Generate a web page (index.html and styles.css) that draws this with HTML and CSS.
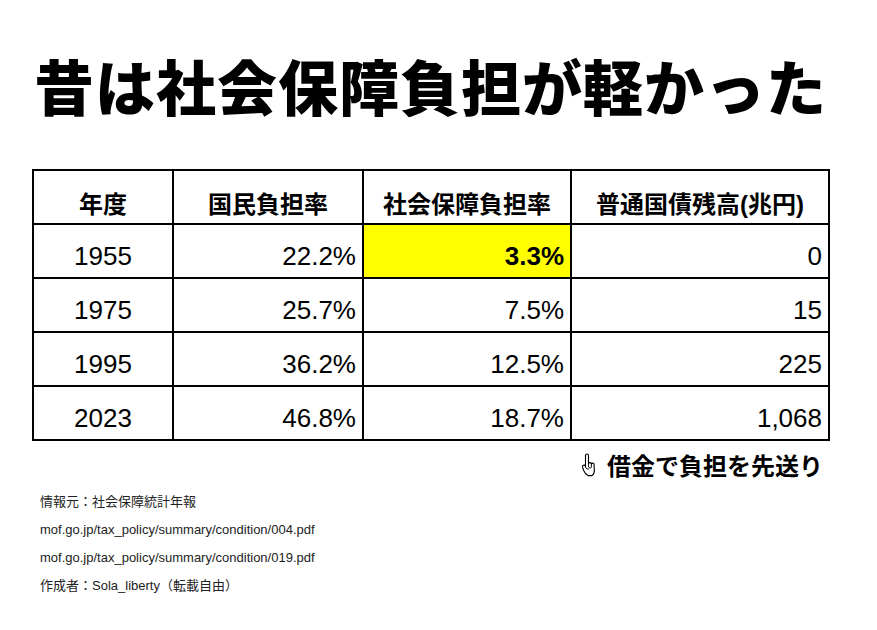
FILE: index.html
```html
<!DOCTYPE html>
<html lang="ja">
<head>
<meta charset="utf-8">
<link rel="stylesheet" href="styles.css">
</head>
<body>
<div class="page">
  <h1 class="title">昔は社会保障負担が軽かった</h1>
  <table class="data">
    <colgroup>
      <col class="c1"><col class="c2"><col class="c3"><col class="c4">
    </colgroup>
    <thead>
      <tr><th>年度</th><th>国民負担率</th><th>社会保障負担率</th><th>普通国債残高(兆円)</th></tr>
    </thead>
    <tbody>
      <tr><td class="year">1955</td><td>22.2%</td><td class="hl">3.3%</td><td>0</td></tr>
      <tr><td class="year">1975</td><td>25.7%</td><td>7.5%</td><td>15</td></tr>
      <tr><td class="year">1995</td><td>36.2%</td><td>12.5%</td><td>225</td></tr>
      <tr><td class="year">2023</td><td>46.8%</td><td>18.7%</td><td>1,068</td></tr>
    </tbody>
  </table>
  <p class="note"><svg class="hand" width="16" height="24" viewBox="0 0 16 24"><path d="M4.5 14 V2.5 A1.5 1.5 0 0 1 7.5 2.5 V10.6 A1.5 1.5 0 0 1 10.4 11 A1.4 1.4 0 0 1 13 12.2 L13.4 17 Q13.4 21 11 22.6 H7 Q4.2 21.2 2.6 17.2 L1.6 14.4 A1.3 1.3 0 0 1 4.5 13.2 Z" fill="#fff" stroke="#000" stroke-width="1.1" stroke-linejoin="round"/><path d="M7.5 10.6 V14 M10.4 11 V14.4 M7.5 14 Q9 16 10.4 14.4 M4.5 14 Q6 17 8 16" fill="none" stroke="#000" stroke-width="0.9"/></svg>借金で負担を先送り</p>
  <ul class="sources">
    <li>情報元：社会保障統計年報</li>
    <li>mof.go.jp/tax_policy/summary/condition/004.pdf</li>
    <li>mof.go.jp/tax_policy/summary/condition/019.pdf</li>
    <li>作成者：Sola_liberty（転載自由）</li>
  </ul>
</div>
</body>
</html>
```
FILE: styles.css
```css
html, body {
  margin: 0;
  padding: 0;
  background: #fff;
}
.page {
  width: 877px;
  height: 630px;
  box-sizing: border-box;
  padding: 55px 0 0 32px;
  font-family: "Liberation Sans", "Noto Sans CJK JP", sans-serif;
  color: #000;
}
.title {
  margin: 0 0 0 2px;
  font-family: "Noto Sans CJK JP", sans-serif;
  font-weight: 900;
  font-size: 60px;
  line-height: 60px;
  letter-spacing: 1px;
  height: 60px;
}
.data {
  margin-top: 54px;
  width: 796px;
  border-collapse: collapse;
  table-layout: fixed;
  border: 2px solid #000;
}
.c1 { width: 140px; }
.c2 { width: 190px; }
.c3 { width: 208px; }
.c4 { width: 258px; }
.data th, .data td {
  border: 2px solid #000;
  height: 54px;
  padding: 0 6px;
  box-sizing: border-box;
}
.data th {
  font-family: "Liberation Sans", "Noto Sans CJK JP", sans-serif;
  font-weight: 700;
  font-size: 24px;
  text-align: center;
  padding-top: 10px;
}
.data td {
  font-size: 26px;
  text-align: right;
  padding-top: 10px;
}
.data td.year {
  text-align: center;
}
.data td.hl {
  background: #ffff00;
  font-weight: 700;
}
.note {
  margin: 9px 0 0;
  width: 791px;
  display: flex;
  justify-content: flex-end;
  align-items: center;
  font-family: "Noto Sans CJK JP", sans-serif;
  font-weight: 700;
  font-size: 24px;
  line-height: 30px;
}
.hand {
  margin-right: 10px;
}
.sources {
  list-style: none;
  margin: 8px 0 0 8px;
  padding: 0;
  font-size: 13px;
  line-height: 28px;
  color: #222;
}
```
